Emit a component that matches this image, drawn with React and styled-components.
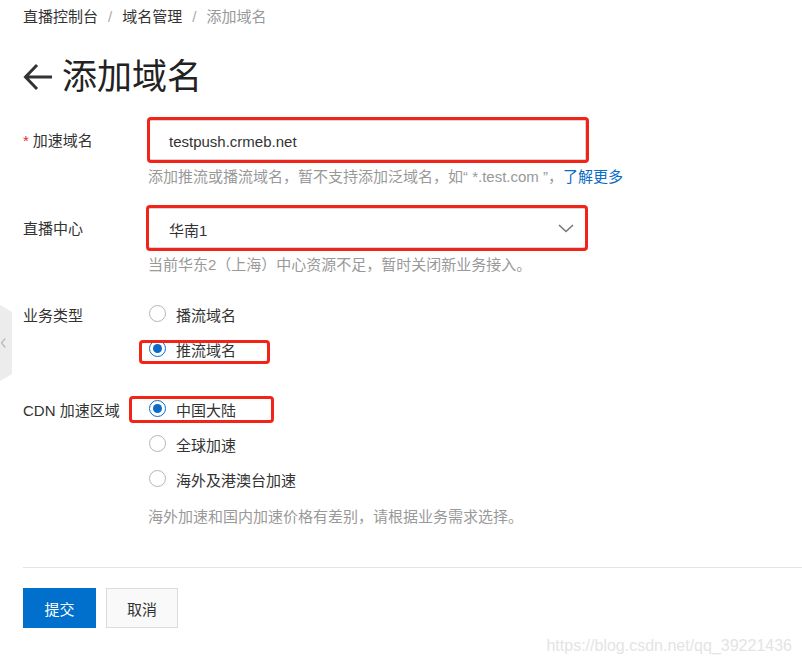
import React from "react";
import styled, { createGlobalStyle } from "styled-components";

const GlobalStyle = createGlobalStyle`
    body {
        margin: 0;
        background: #fff;
        font-family: "Liberation Sans", "Noto Sans CJK SC", sans-serif;
        color: #333;
    }
`

const Page = styled.div`
    position: relative;
    width: 802px;
    height: 663px;
    padding-left: 23px;
    box-sizing: border-box;
    overflow: hidden;
`
const Breadcrumb = styled.div`
    display: flex;
    align-items: center;
    padding-top: 7px;
    height: 20px;
    font-size: 15px;
    line-height: 20px;
`
const Crumb = styled.span`
    color: ${props => props.current ? "#999" : "#333"};
`
const Sep = styled.span`
    color: #aaa;
    margin: 0 10px;
`
const TitleRow = styled.div`
    display: flex;
    align-items: center;
    gap: 9px;
    margin-top: 26px;
    height: 48px;
`
const Title = styled.h1`
    margin: 0;
    font-size: 35px;
    font-weight: 400;
    color: #222;
    line-height: 48px;
`
const Form = styled.div`
    margin-top: 19px;
`
const Row = styled.div`
    display: flex;
    align-items: ${props => props.top ? "flex-start" : "center"};
    margin-top: ${props => props.gap || 0}px;
`
const Label = styled.div`
    width: 125px;
    flex-shrink: 0;
    padding-top: 2px;
    font-size: 15px;
    line-height: 20px;
    color: #333;
`
const Star = styled.span`
    color: #e0302a;
    margin-right: 4px;
`
const Field = styled.div`
    position: relative;
    width: 438px;
    height: 40px;
    border: 1px solid #d4d4d4;
    box-sizing: border-box;
    display: flex;
    align-items: center;
    padding: 0 11px 0 20px;
    font-size: 15px;
    color: #333;
`
const FieldText = styled.span`
    flex: 1;
    margin-top: 3px;
`
const Help = styled.div`
    margin: ${props => props.gap || 7}px 0 0 125px;
    font-size: 15px;
    line-height: 20px;
    color: #999;
`
const Link = styled.a`
    color: #0a6cc7;
    text-decoration: none;
`
const Group = styled.div`
    display: flex;
    flex-direction: column;
    gap: 15px;
`
const Option = styled.label`
    position: relative;
    display: flex;
    align-items: center;
    height: 20px;
    font-size: 15px;
    color: #333;
`
const Radio = styled.span`
    width: 15px;
    height: 15px;
    border-radius: 50%;
    border: 1px solid ${props => props.on ? "#0a6cc7" : "#b5b5b5"};
    margin: -1px 10px 0 1px;
    display: flex;
    align-items: center;
    justify-content: center;
    &::after {
        content: "";
        width: 9px;
        height: 9px;
        border-radius: 50%;
        background: ${props => props.on ? "#0a6cc7" : "transparent"};
    }
`
const Mark = styled.span`
    position: absolute;
    top: ${props => props.t}px;
    left: ${props => props.l}px;
    width: ${props => props.w}px;
    height: ${props => props.h}px;
    border: 3px solid #f2241a;
    border-radius: 4px;
    box-sizing: border-box;
    pointer-events: none;
`
const Divider = styled.div`
    margin-top: 40px;
    height: 1px;
    background: #e3e3e3;
`
const Actions = styled.div`
    display: flex;
    gap: 10px;
    margin-top: 20px;
`
const Button = styled.button`
    width: ${props => props.primary ? 73 : 72}px;
    height: 40px;
    border: 1px solid ${props => props.primary ? "#0070cc" : "#dcdcdc"};
    background: ${props => props.primary ? "#0070cc" : "#f9f9f9"};
    color: ${props => props.primary ? "#fff" : "#333"};
    font-family: inherit;
    font-size: 15px;
    padding: 0;
`
const SideTab = styled.div`
    position: absolute;
    left: 0;
    top: 305px;
    width: 12px;
    height: 76px;
    background: #ececec;
    clip-path: polygon(0 0, 100% 7px, 100% calc(100% - 7px), 0 100%);
    display: flex;
    align-items: center;
`
const Watermark = styled.div`
    position: absolute;
    right: 10px;
    bottom: 8px;
    font-family: "Liberation Sans", sans-serif;
    font-size: 16px;
    color: #e4e4e4;
`

const Chevron = ({ w = 16, color = "#777", dir = "down" }) => (
    <svg width={w} height={w} viewBox="0 0 16 16" fill="none" stroke={color} strokeWidth="1.6">
        {dir === "down"
            ? <path d="M1 5 L8 11.5 L15 5" />
            : <path d="M7 2 L2 8 L7 14" />}
    </svg>
)

export default class App extends React.Component{
    render(){
        return(
        <Page>
            <GlobalStyle />
            <SideTab><Chevron w={12} color="#b8b8b8" dir="left" /></SideTab>
            <Breadcrumb>
                <Crumb>直播控制台</Crumb><Sep>/</Sep>
                <Crumb>域名管理</Crumb><Sep>/</Sep>
                <Crumb current>添加域名</Crumb>
            </Breadcrumb>
            <TitleRow>
                <svg width="30" height="28" viewBox="0 0 30 28" fill="none" stroke="#333" strokeWidth="3">
                    <path d="M29 14 H3 M14 2 L2.5 14 L14 26" />
                </svg>
                <Title>添加域名</Title>
            </TitleRow>

            <Form>
                <Row>
                    <Label><Star>*</Star>加速域名</Label>
                    <Field>
                        <FieldText>testpush.crmeb.net</FieldText>
                        <Mark t={-4} l={-2} w={442} h={46} />
                    </Field>
                </Row>
                <Help>添加推流或播流域名，暂不支持添加泛域名，如“ *.test.com ”，<Link>了解更多</Link></Help>

                <Row gap={21}>
                    <Label>直播中心</Label>
                    <Field>
                        <FieldText>华南1</FieldText>
                        <Chevron />
                        <Mark t={-4} l={-3} w={442} h={46} />
                    </Field>
                </Row>
                <Help>当前华东2（上海）中心资源不足，暂时关闭新业务接入。</Help>

                <Row top gap={29}>
                    <Label>业务类型</Label>
                    <Group>
                        <Option><Radio />播流域名</Option>
                        <Option><Radio on />推流域名<Mark t={1} l={-9} w={131} h={24} /></Option>
                    </Group>
                </Row>

                <Row top gap={40}>
                    <Label>CDN 加速区域</Label>
                    <Group>
                        <Option><Radio on />中国大陆<Mark t={-3} l={-19} w={145} h={27} /></Option>
                        <Option><Radio />全球加速</Option>
                        <Option><Radio />海外及港澳台加速</Option>
                    </Group>
                </Row>
                <Help gap={18}>海外加速和国内加速价格有差别，请根据业务需求选择。</Help>
            </Form>

            <Divider />
            <Actions>
                <Button primary>提交</Button>
                <Button>取消</Button>
            </Actions>
            <Watermark>https://blog.csdn.net/qq_39221436</Watermark>
        </Page>
        )
    }
}
